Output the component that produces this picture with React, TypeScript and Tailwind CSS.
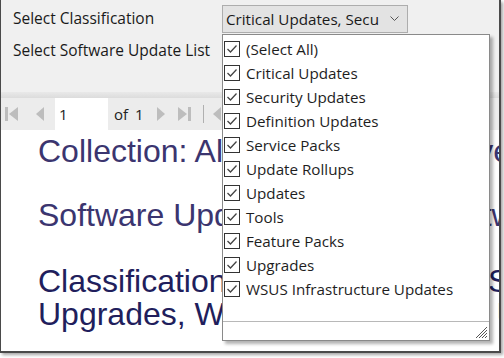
const classifications = [
  "(Select All)",
  "Critical Updates",
  "Security Updates",
  "Definition Updates",
  "Service Packs",
  "Update Rollups",
  "Updates",
  "Tools",
  "Feature Packs",
  "Upgrades",
  "WSUS Infrastructure Updates",
];

const uiFont = { fontFamily: '"Open Sans", "Noto Sans", sans-serif' };
const reportFont = { fontFamily: '"Liberation Sans", Arial, sans-serif' };

function CheckBox() {
  return (
    <span className="flex h-[16px] w-[16px] shrink-0 items-center justify-center border border-[#333] bg-white">
      <svg width="12" height="10" viewBox="0 0 12 10">
        <path d="M1.5 5 L4.5 8 L10.5 1.5" fill="none" stroke="#444" strokeWidth="1.3" />
      </svg>
    </span>
  );
}

function NavIcon({ kind }: { kind: "first" | "prev" | "next" | "last" }) {
  const fill = "#bdbdbd";
  return (
    <svg width="14" height="16" viewBox="0 0 14 16">
      {kind === "first" && (
        <>
          <rect x="0" y="1" width="3" height="14" fill={fill} />
          <path d="M13 1 L4 8 L13 15 Z" fill={fill} />
        </>
      )}
      {kind === "prev" && <path d="M11 1 L3 8 L11 15 Z" fill={fill} />}
      {kind === "next" && <path d="M3 1 L11 8 L3 15 Z" fill={fill} />}
      {kind === "last" && (
        <>
          <path d="M1 1 L10 8 L1 15 Z" fill={fill} />
          <rect x="11" y="1" width="3" height="14" fill={fill} />
        </>
      )}
    </svg>
  );
}

export default function App() {
  return (
    <div className="h-[358px] w-[504px] overflow-hidden bg-white">
      <div className="relative flex h-[353px] w-[501px] flex-col overflow-hidden border-b-2 border-l border-r-2 border-[#4a4a4a] shadow-[2px_2px_3px_rgba(0,0,0,0.35)]">
        {/* parameter header */}
        <div className="h-[92px] bg-[#f0f0f0] pt-[5px] text-[15.5px] text-[#1a1a1a]" style={uiFont}>
          <div className="flex h-[28px] items-center">
            <span className="w-[221px] pl-[12px]">Select Classification</span>
            <div className="flex h-[28px] w-[186px] items-center justify-between border border-[#adadad] bg-[#e3e3e3] pl-[3px] pr-[8px] text-[15.2px]">
              <span className="whitespace-nowrap">Critical Updates, Secu</span>
              <svg width="9" height="6" viewBox="0 0 9 6">
                <path d="M0.5 0.5 L4.5 4.5 L8.5 0.5" fill="none" stroke="#555" strokeWidth="1" />
              </svg>
            </div>
          </div>
          <div className="mt-[4px] flex h-[28px] items-center">
            <span className="w-[221px] pl-[12px]">Select Software Update List</span>
          </div>
        </div>
        <div className="h-[6px] bg-gradient-to-b from-[#e9e9e9] to-[#dcdcdc]" />

        {/* report toolbar */}
        <div className="flex h-[32px] items-center bg-[#ececec] text-[15px] text-[#222]" style={uiFont}>
          <div className="ml-[4px]"><NavIcon kind="first" /></div>
          <div className="ml-[14px]"><NavIcon kind="prev" /></div>
          <div className="ml-[8px] flex h-full w-[53px] items-center bg-white pl-[4px]">1</div>
          <span className="ml-[6px]">of</span>
          <span className="ml-[7px]">1</span>
          <div className="ml-[10px]"><NavIcon kind="next" /></div>
          <div className="ml-[9px]"><NavIcon kind="last" /></div>
          <div className="ml-[12px] h-[18px] w-px bg-[#b0b0b0]" />
          <div className="ml-[6px]"><NavIcon kind="prev" /></div>
        </div>

        {/* report body */}
        <div className="flex-1 bg-white pl-[37px] pt-[5px] text-[32px] leading-[33px]" style={reportFont}>
          <div className="whitespace-nowrap text-[#3b356f]">Collection: All Desktop and Server Clients</div>
          <div className="mt-[31px] whitespace-nowrap text-[#3b356f]">Software Update Group: All Software</div>
          <div className="mt-[33px] whitespace-nowrap text-[#211e5c]">
            Classification: Critical Updates, Security Updates, Definition Updates
            <br />
            Upgrades, WSUS Infrastructure Updates
          </div>
        </div>

        {/* open classification list */}
        <div
          className="absolute left-[221px] top-[34px] flex h-[307px] w-[268px] flex-col border border-[#8a8a8a] bg-white text-[15.2px] text-[#1e1e1e] shadow-[3px_3px_3px_rgba(0,0,0,0.3)]"
          style={uiFont}
        >
          <div className="flex-1 pt-[2px]">
            {classifications.map((item) => (
              <div key={item} className="flex h-[24px] items-center gap-[6px] pl-[1px]">
                <CheckBox />
                <span className="whitespace-nowrap">{item}</span>
              </div>
            ))}
          </div>
          <div className="flex h-[19px] items-end justify-end border-t border-[#b8b8b8] pb-[1px] pr-[1px]">
            <svg width="13" height="13" viewBox="0 0 13 13">
              <path d="M12 1 L1 12 M12 4 L4 12 M12 7 L7 12 M12 10 L10 12" stroke="#555" strokeWidth="1" />
            </svg>
          </div>
        </div>
      </div>
    </div>
  );
}
